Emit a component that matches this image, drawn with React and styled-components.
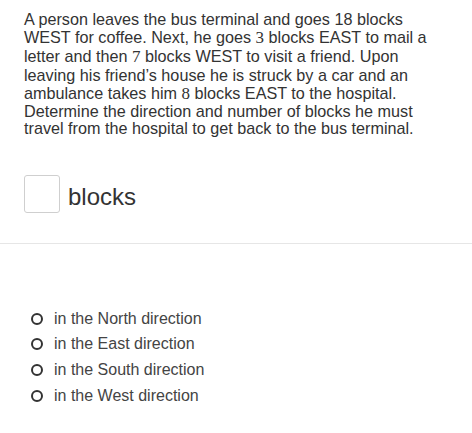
import React from "react";
import styled, { createGlobalStyle } from "styled-components";

const Global = createGlobalStyle`
  body {
    margin: 0;
    background: #fff;
    font-family: "Liberation Sans", Arial, sans-serif;
    color: #333;
  }
`;

const Page = styled.div`
  width: 472px;
  height: 433px;
  overflow: hidden;
`;

const Question = styled.div`
  padding: 10px 24px 0 24px;
  font-size: 16.2px;
`;

const Line = styled.div`
  line-height: ${(p) => p.h || 17}px;
  white-space: nowrap;
`;

const Num = styled.span`
  font-family: "Liberation Serif", "Times New Roman", serif;
  font-size: 17px;
`;

const AnswerRow = styled.div`
  display: flex;
  align-items: center;
  gap: 8px;
  padding: 39px 24px 30px 24px;
`;

const Box = styled.div`
  width: 34px;
  height: 36px;
  border: 1px solid #cfcfcf;
  border-radius: 3px;
  background: #fff;
`;

const Unit = styled.span`
  font-size: 24px;
  color: #333;
  position: relative;
  top: 3px;
`;

const Divider = styled.hr`
  margin: 0;
  border: none;
  border-top: 1px solid #e6e6e6;
`;

const Options = styled.div`
  display: flex;
  flex-direction: column;
  padding: 65px 0 0 31px;
  gap: 6.7px;
`;

const Option = styled.label`
  display: flex;
  align-items: center;
  gap: 11px;
  font-size: 16px;
  color: #444;
  height: 19px;
`;

const Radio = styled.span`
  width: 8px;
  height: 8px;
  border: 2.5px solid #333;
  border-radius: 50%;
  flex-shrink: 0;
`;

const options = ["North", "East", "South", "West"];

export default function App() {
  return (
    <Page>
      <Global />
      <Question>
        <Line h={18}>A person leaves the bus terminal and goes 18 blocks</Line>
        <Line h={19}>
          WEST for coffee. Next, he goes <Num>3</Num> blocks EAST to mail a
        </Line>
        <Line h={19}>
          letter and then <Num>7</Num> blocks WEST to visit a friend. Upon
        </Line>
        <Line h={18}>leaving his friend’s house he is struck by a car and an</Line>
        <Line h={18}>
          ambulance takes him <Num>8</Num> blocks EAST to the hospital.
        </Line>
        <Line h={17}>Determine the direction and number of blocks he must</Line>
        <Line h={16}>travel from the hospital to get back to the bus terminal.</Line>
      </Question>
      <AnswerRow>
        <Box />
        <Unit>blocks</Unit>
      </AnswerRow>
      <Divider />
      <Options>
        {options.map((d) => (
          <Option key={d}>
            <Radio />
            in the {d} direction
          </Option>
        ))}
      </Options>
    </Page>
  );
}
